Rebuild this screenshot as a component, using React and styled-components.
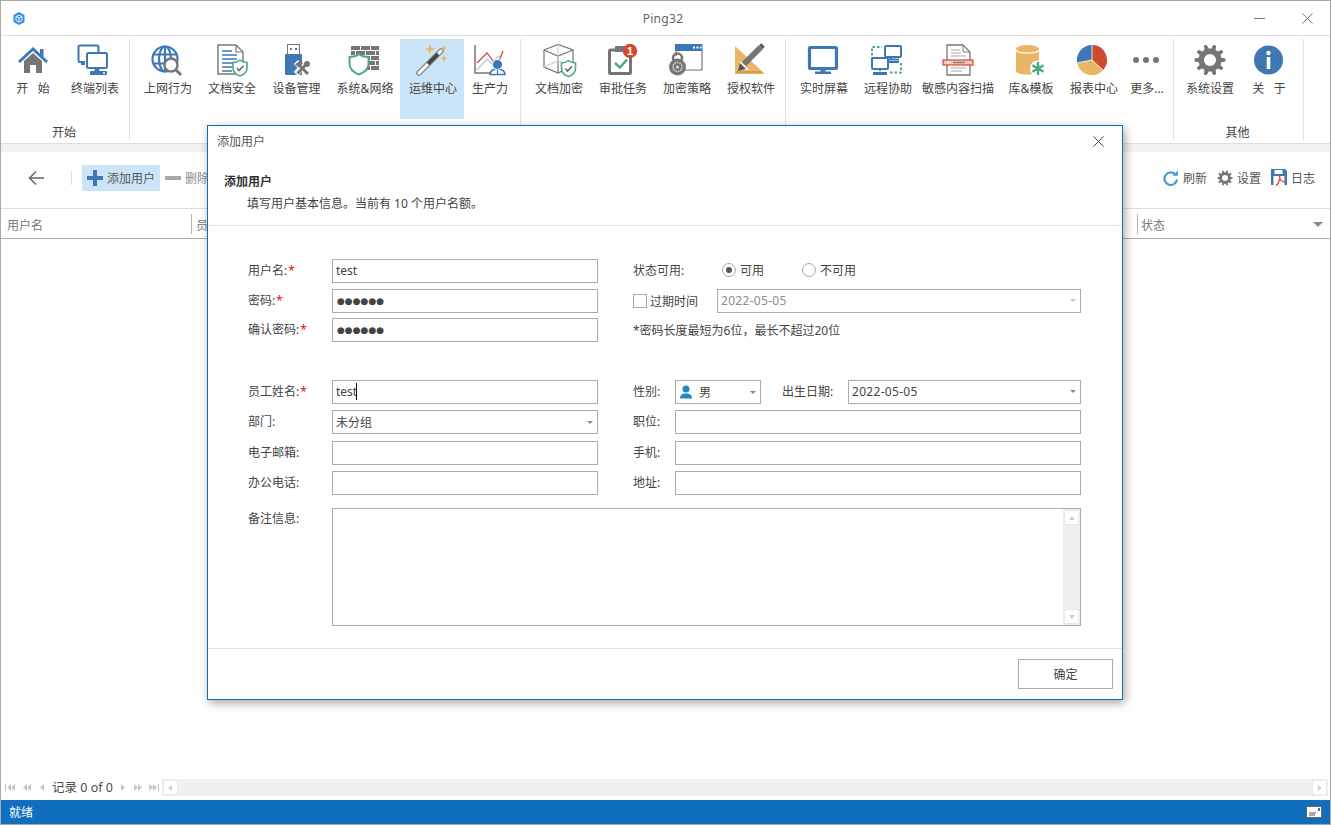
import React from 'react'
import styled, { createGlobalStyle } from 'styled-components'

const BLUE = '#3d78b4'
const GRAY = '#767676'
const GREEN = '#4fa883'
const ORANGE = '#e9b665'
const RED = '#cf4a2f'

const GlobalStyle = createGlobalStyle`
  html, body {
    margin: 0;
    padding: 0;
    background: #fff;
  }
  body {
    font-family: "Noto Sans", "Noto Sans CJK SC", sans-serif;
    font-size: 12px;
    color: #444;
  }
`

const Window = styled.div`
  position: relative;
  box-sizing: border-box;
  height: 100vh;
  border: 1px solid #a9a9a9;
  display: flex;
  flex-direction: column;
  overflow: hidden;
`

const TitleBar = styled.header`
  box-sizing: border-box;
  height: 35px;
  flex: none;
  border-bottom: 1px solid #dedede;
  display: grid;
  grid-template-columns: 1fr auto 1fr;
  align-items: center;
  color: #666;
  letter-spacing: 0.3px;
  padding: 0 17px 0 12px;
`

const WindowButtons = styled.div`
  display: flex;
  justify-content: flex-end;
  align-items: center;
  gap: 37px;
`

const Ribbon = styled.nav`
  box-sizing: border-box;
  height: 108px;
  flex: none;
  padding-top: 3px;
  border-bottom: 1px solid #dedede;
  display: flex;
`

const Group = styled.section`
  box-sizing: border-box;
  width: ${p => p.$width}px;
  height: 101px;
  padding-left: ${p => p.$pad}px;
  border-right: 1px solid #e2e2e2;
  display: flex;
  flex-direction: column;
`

const GroupItems = styled.div`
  display: flex;
  height: 80px;
`

const GroupLabel = styled.div`
  margin-top: 6px;
  line-height: 16px;
  text-align: center;
  margin-left: -${p => p.$pad}px;
  padding-right: 2px;
`

const RibbonItem = styled.div`
  width: ${p => p.$width}px;
  flex: none;
  height: 80px;
  padding-top: 5px;
  box-sizing: border-box;
  background: ${p => (p.$active ? '#cce4f7' : 'transparent')};
  display: flex;
  flex-direction: column;
  align-items: center;
  svg {
    display: block;
    overflow: visible;
  }
`

const RibbonText = styled.span`
  margin-top: 5px;
  margin-left: ${p => (p.$nudge ? '2px' : '0')};
  line-height: 16px;
  white-space: pre;
`

const Strip = styled.div`
  height: 8px;
  flex: none;
  background: #f1f1f1;
`

const Toolbar = styled.div`
  box-sizing: border-box;
  height: 57px;
  flex: none;
  padding: 0 15px 5px 27px;
  border-bottom: 1px solid #dedede;
  display: flex;
  align-items: center;
`

const ToolSeparator = styled.div`
  width: 1px;
  height: 14px;
  background: #dcdcdc;
  margin: 0 10px 0 27px;
`

const ToolButton = styled.div`
  height: 26px;
  padding: 0 5px;
  display: flex;
  align-items: center;
  gap: 4px;
  color: ${p => (p.$muted ? '#8a8a8a' : '#555')};
  background: ${p => (p.$active ? '#cce4f7' : 'transparent')};
  white-space: nowrap;
`

const ToolRight = styled.div`
  margin-left: auto;
  display: flex;
  align-items: center;
  gap: 10px;
`

const ToolLink = styled.div`
  display: flex;
  align-items: center;
  gap: 4px;
  color: #555;
`

const HeaderRow = styled.div`
  box-sizing: border-box;
  height: 30px;
  flex: none;
  border-bottom: 1px solid #adadad;
  display: flex;
  align-items: center;
  color: #777;
`

const HeaderCell = styled.div`
  box-sizing: border-box;
  height: 20px;
  width: ${p => (p.$width ? `${p.$width}px` : 'auto')};
  flex: ${p => (p.$width ? 'none' : '1')};
  padding: 2px 0 0 ${p => p.$pad}px;
  border-right: ${p => (p.$last ? 'none' : '1px solid #b5b5b5')};
  display: flex;
  align-items: center;
  justify-content: space-between;
`

const SortCaret = styled.i`
  width: 0;
  height: 0;
  margin-right: 7px;
  border-left: 5px solid transparent;
  border-right: 5px solid transparent;
  border-top: 5px solid #888;
`

const ListBody = styled.main`
  flex: 1;
`

const Pager = styled.div`
  height: 17px;
  flex: none;
  margin-bottom: 4px;
  padding: 0 2px 0 4px;
  display: flex;
  align-items: center;
`

const PagerText = styled.span`
  font-size: 12.5px;
  margin: 0 8px 2px 7px;
  white-space: nowrap;
  color: #4a4a4a;
`

const NavIcon = styled.svg`
  flex: none;
  margin-left: ${p => p.$gap || 0}px;
`

const HScroll = styled.div`
  flex: 1;
  height: 17px;
  margin-left: 3px;
  background: #f0f0f0;
  display: flex;
  justify-content: space-between;
  align-items: center;
  padding: 0 1px;
`

const ScrollButton = styled.div`
  box-sizing: border-box;
  width: 15px;
  height: 15px;
  background: #fff;
  border: 1px solid #e8e8e8;
  display: flex;
  align-items: center;
  justify-content: center;
  flex: none;
`

const Triangle = styled.i`
  width: 0;
  height: 0;
  ${p => {
    const side = '3px solid transparent'
    const fill = '4px solid #cfcfcf'
    if (p.$dir === 'left') return `border-top:${side};border-bottom:${side};border-right:${fill};`
    if (p.$dir === 'right') return `border-top:${side};border-bottom:${side};border-left:${fill};`
    if (p.$dir === 'up') return `border-left:${side};border-right:${side};border-bottom:${fill};`
    return `border-left:${side};border-right:${side};border-top:${fill};`
  }}
`

const StatusBar = styled.footer`
  height: 24px;
  flex: none;
  background: #0f6ebe;
  color: #fff;
  padding: 0 8px;
  display: flex;
  align-items: center;
  justify-content: space-between;
`

const Dialog = styled.div`
  position: absolute;
  left: 206px;
  top: 124px;
  width: 916px;
  height: 575px;
  box-sizing: border-box;
  background: #fff;
  border: 1px solid #0f6ebe;
  box-shadow: 2px 3px 9px rgba(0, 0, 0, 0.35);
  display: flex;
  flex-direction: column;
`

const DialogTitle = styled.div`
  height: 30px;
  flex: none;
  padding: 0 18px 0 9px;
  display: flex;
  align-items: center;
  justify-content: space-between;
  color: #555;
`

const DialogHead = styled.div`
  box-sizing: border-box;
  height: 70px;
  flex: none;
  padding: 17px 0 0 16px;
  border-bottom: 1px solid #e2e2e2;
`

const Heading = styled.div`
  font-weight: 700;
  line-height: 18px;
  color: #333;
`

const SubHeading = styled.div`
  margin: 4px 0 0 23px;
  line-height: 18px;
`

const Form = styled.form`
  flex: 1;
  padding: 33px 0 0 40px;
`

const Row = styled.div`
  display: flex;
  height: ${p => p.$height || 24}px;
  margin-top: ${p => p.$top || 0}px;
  align-items: ${p => (p.$tall ? 'flex-start' : 'center')};
`

const Label = styled.label`
  width: ${p => p.$width || 84}px;
  margin-left: ${p => p.$left || 0}px;
  flex: none;
  line-height: ${p => (p.$tall ? '22px' : '24px')};
  white-space: nowrap;
`

const Star = styled.span`
  color: #e01010;
  margin-left: 1px;
`

const Field = styled.div`
  box-sizing: border-box;
  height: 24px;
  width: ${p => (p.$width ? `${p.$width}px` : 'auto')};
  flex: ${p => (p.$width ? 'none' : '1')};
  border: 1px solid #ababab;
  padding: 0 3px ${p => (p.$latin ? '1px' : '0')};
  display: flex;
  align-items: center;
  color: ${p => (p.$muted ? '#8b8b8b' : '#444')};
  letter-spacing: ${p => (p.$date ? '0.3px' : '0')};
  white-space: nowrap;
`

const Dots = styled.span`
  font-family: "DejaVu Sans", sans-serif;
  font-size: 9px;
  color: #444;
  margin-left: 1px;
`

const TextCaret = styled.i`
  width: 1px;
  height: 17px;
  margin-left: -1px;
  background: #111;
`

const GenderText = styled.span`
  margin-left: 6px;
`

const SelectCaret = styled.i`
  margin-left: auto;
  margin-right: 1px;
  width: 0;
  height: 0;
  border-left: 3px solid transparent;
  border-right: 3px solid transparent;
  border-top: 3px solid ${p => (p.$faint ? '#c4c4c4' : '#888')};
`

const RightPart = styled.div`
  width: 448px;
  margin-left: 35px;
  flex: none;
  display: flex;
  align-items: center;
`

const Radio = styled.span`
  box-sizing: border-box;
  width: 14px;
  height: 14px;
  border-radius: 50%;
  border: 1px solid #a8a8a8;
  flex: none;
  display: flex;
  align-items: center;
  justify-content: center;
  &::after {
    content: '';
    width: 6px;
    height: 6px;
    border-radius: 50%;
    background: ${p => (p.$on ? '#555' : 'transparent')};
  }
`

const RadioOption = styled.span`
  display: flex;
  align-items: center;
  gap: 4px;
  width: ${p => p.$width}px;
  margin-top: -2px;
`

const Check = styled.span`
  box-sizing: border-box;
  width: 14px;
  height: 14px;
  border: 1px solid #a8a8a8;
  flex: none;
  margin-right: 3px;
`

const CheckText = styled.span`
  width: 67px;
  flex: none;
`

const Memo = styled.div`
  box-sizing: border-box;
  width: 749px;
  height: 118px;
  border: 1px solid #ababab;
  display: flex;
  justify-content: flex-end;
`

const VScroll = styled.div`
  width: 17px;
  background: #f0f0f0;
  padding: 1px;
  box-sizing: border-box;
  display: flex;
  flex-direction: column;
  justify-content: space-between;
`

const DialogFoot = styled.div`
  box-sizing: border-box;
  height: 51px;
  flex: none;
  border-top: 1px solid #e2e2e2;
  padding: 10px 9px 0 0;
  display: flex;
  justify-content: flex-end;
`

const OkButton = styled.button`
  box-sizing: border-box;
  width: 95px;
  height: 30px;
  background: #fff;
  border: 1px solid #ababab;
  font: inherit;
  color: #444;
  padding: 0;
`

const gearPath = (cx, cy, ro, ri, n) => {
  const step = (Math.PI * 2) / n
  const pts = []
  for (let i = 0; i < n; i++) {
    const a = i * step
    const pt = (r, t) => `${(cx + r * Math.cos(t)).toFixed(2)} ${(cy + r * Math.sin(t)).toFixed(2)}`
    pts.push(pt(ri, a - step * 0.3), pt(ro, a - step * 0.16), pt(ro, a + step * 0.16), pt(ri, a + step * 0.3))
  }
  return `M${pts.join('L')}Z`
}

const Shield = ({ x, y, scale = 1 }) => (
  <g transform={`translate(${x} ${y}) scale(${scale})`}>
    <path d="M0-8C2.5-6 5-5.5 7-5.5V0C7 4 4 6.5 0 8C-4 6.5-7 4-7 0V-5.5C-5-5.5-2.5-6 0-8Z" fill="#fff" stroke={GREEN} strokeWidth="1.6" />
    <path d="M-3 0L-1 2.5 3.5-2.2" fill="none" stroke="#666" strokeWidth="1.5" />
  </g>
)

const Ico = ({ children }) => (
  <svg width="32" height="32" viewBox="0 0 32 32">
    {children}
  </svg>
)

const HomeIcon = () => (
  <Ico>
    <rect x="23" y="5" width="3.5" height="8" fill={BLUE} />
    <path d="M7 17L16 9 25 17V29H19V21H13V29H7Z" fill={GRAY} />
    <path d="M2 18L16 5 30 18" fill="none" stroke={BLUE} strokeWidth="3" />
  </Ico>
)

const TerminalsIcon = () => (
  <Ico>
    <g transform="translate(-1 0)">
      <path d="M7 18H2a1.5 1.5 0 0 1-1.5-1.5V3A1.5 1.5 0 0 1 2 1.500H19A1.500 1.500 0 0 1 20.500 3V8" fill="none" stroke={BLUE} strokeWidth="2" />
      <rect x="3" y="18" width="4" height="3" fill={BLUE} />
      <rect x="9" y="9" width="20" height="15" rx="1.500" fill="#fff" stroke={BLUE} strokeWidth="2" />
      <rect x="16.500" y="24" width="5" height="3" fill={BLUE} />
      <rect x="12" y="27" width="17" height="4" rx="1" fill={BLUE} />
      <circle cx="26" cy="29" r="1" fill="#fff" />
    </g>
  </Ico>
)

const GlobeIcon = () => (
  <Ico>
    <g fill="none" stroke={BLUE} strokeWidth="2.2">
      <circle cx="14" cy="15" r="12.500" />
      <ellipse cx="14" cy="15" rx="6" ry="12.500" />
      <path d="M14 2.500V27.500M2 10.500H26M2 19.500H26" />
    </g>
    <circle cx="20" cy="21" r="6.500" fill="#fff" stroke={GRAY} strokeWidth="2.400" />
    <path d="M24.500 25.500L30 31" stroke={GRAY} strokeWidth="3" />
  </Ico>
)

const DocShieldIcon = () => (
  <Ico>
    <path d="M3 1H21L28 8V30H3Z" fill="#fff" stroke={GRAY} strokeWidth="1.400" />
    <path d="M21 1V8H28" fill="none" stroke={GRAY} strokeWidth="1.200" />
    <path d="M7 7H17M7 11H22M7 15H22M7 19H20M7 23H17M7 27H17" stroke={BLUE} strokeWidth="1.300" />
    <Shield x={25} y={24} />
  </Ico>
)

const UsbIcon = () => (
  <Ico>
    <rect x="7.500" y="0.500" width="12" height="10" fill="#fff" stroke={GRAY} />
    <rect x="10" y="4" width="2" height="2" fill={GRAY} />
    <rect x="15" y="4" width="2" height="2" fill={GRAY} />
    <rect x="5" y="10" width="17" height="21" rx="1" fill={BLUE} />
    <path d="M16 18L29 31M27 17L16 30" stroke="#fff" strokeWidth="6" />
    <path d="M18 20L28 30" stroke={GRAY} strokeWidth="3" />
    <path d="M26.500 20L17.500 29.500" stroke={GRAY} strokeWidth="3" />
    <path d="M15 20.500L20 16.500 23 19.500 19 23.500Z" fill={GRAY} />
    <circle cx="27" cy="20" r="3" fill={GRAY} />
  </Ico>
)

const WallIcon = () => {
  const rows = [
    [[3, 9], [13, 9], [23, 8]],
    [[3, 4], [8, 9], [18, 9], [28, 3]],
    [[3, 9], [13, 9], [23, 8]],
    [[8, 9], [18, 9], [28, 3]],
    [[13, 9], [23, 8]]
  ]
  return (
    <Ico>
      {rows.map((row, r) =>
        row.map(([x, w]) => <rect key={`${r}-${x}`} x={x} y={2 + r * 5} width={w} height="4" fill={GRAY} />)
      )}
      <path d="M11 10C14 12.500 18 13 20.500 13V20C20.500 25 16 28.500 11 30.500C6 28.500 1.500 25 1.500 20V13C4 13 8 12.500 11 10Z" fill="#fff" stroke={GREEN} strokeWidth="2" />
    </Ico>
  )
}

const WandIcon = () => (
  <Ico>
    <path d="M3 29L25 7" stroke="#888" strokeWidth="5.500" strokeLinecap="round" />
    <path d="M3 29L12 20" stroke="#fff" strokeWidth="3" strokeLinecap="round" />
    <path d="M12 20L22 10" stroke="#444" strokeWidth="3.500" />
    <path d="M23 9L25 7" stroke="#fff" strokeWidth="3" strokeLinecap="round" />
    <path d="M14 0L15.500 4 19.500 5 15.500 6.500 14 10 12.500 6.500 8.500 5 12.500 4Z" fill={ORANGE} />
    <path d="M28 1L29 3 31 4 29 5 28 7 27 5 25 4 27 3Z" fill={ORANGE} />
    <path d="M28 11L29.200 13.500 31.500 14.500 29.200 15.500 28 18 26.800 15.500 24.500 14.500 26.800 13.500Z" fill={ORANGE} />
  </Ico>
)

const ProductivityIcon = () => (
  <Ico>
    <path d="M2 1V29H20" fill="none" stroke={GRAY} strokeWidth="1.500" />
    <path d="M4 26L14 15 19 20 24 13 29 12" fill="none" stroke="#a9c6e6" strokeWidth="1.200" />
    <path d="M4 19L14 9 24 22 30 7" fill="none" stroke={RED} strokeWidth="1.200" />
    <path d="M17 30.500C17 27 20 26 22 25H27C29 26 32 27 32 30.500Z" fill="#fff" stroke={BLUE} strokeWidth="1.600" />
    <circle cx="24.500" cy="20.500" r="5" fill={BLUE} stroke="#fff" />
    <path d="M24.500 26V30" stroke={BLUE} strokeWidth="1.200" />
  </Ico>
)

const CubeIcon = () => (
  <Ico>
    <g fill="none" stroke={GRAY} strokeWidth="1.200">
      <path d="M1 6L15 0.500 30 6V22L15 29 1 23Z" />
      <path d="M1 6L15 12 30 6M15 12V29" />
      <path d="M1 23L15 17 30 22M15 0.500V17" stroke="#cfcfcf" />
    </g>
    <Shield x={25.500} y={24.500} />
  </Ico>
)

const ClipboardIcon = () => (
  <Ico>
    <rect x="2.500" y="6" width="21" height="23.500" rx="1" fill="#fff" stroke={GRAY} strokeWidth="3" />
    <rect x="8" y="2" width="10" height="6" fill={GRAY} />
    <path d="M8 19L13 23.500 20 15.500" fill="none" stroke={GREEN} strokeWidth="2.600" />
    <circle cx="23" cy="7" r="7.200" fill={RED} />
    <text x="23" y="11" fontSize="11" fontWeight="700" textAnchor="middle" fill="#fff" fontFamily="Liberation Sans, sans-serif">1</text>
  </Ico>
)

const LockWindowIcon = () => (
  <Ico>
    <path d="M31 7V26H12M5 7V12" fill="none" stroke={GRAY} strokeWidth="1.200" />
    <rect x="4" y="0" width="27.500" height="7" fill={BLUE} />
    <path d="M22 3.500H24M25.500 3.500H27.500M29 3.500H30.500" stroke="#fff" strokeWidth="1.800" />
    <circle cx="6.500" cy="14" r="4.500" fill="none" stroke={GRAY} strokeWidth="2.600" />
    <circle cx="6.500" cy="23" r="8.500" fill={GRAY} />
    <circle cx="6.500" cy="23" r="4.500" fill="none" stroke="#ddd" strokeWidth="1.500" strokeDasharray="1.500 1" />
    <circle cx="6.500" cy="23" r="1.500" fill="#ddd" />
  </Ico>
)

const RulerIcon = () => (
  <Ico>
    <path d="M0 2V30H30Z" fill={ORANGE} />
    <path d="M5 17V26H14Z" fill="#fff" />
    <path d="M2 28H27" stroke="#8a6a30" strokeWidth="1.500" strokeDasharray="1 1.500" />
    <path d="M9 20L26 3" stroke={GRAY} strokeWidth="6" />
    <path d="M26 3L28 1" stroke="#555" strokeWidth="5" />
    <path d="M3 27L5 19 11 25Z" fill="#555" />
  </Ico>
)

const MonitorIcon = () => (
  <Ico>
    <rect x="1.500" y="3.500" width="27" height="21" rx="1" fill="#fff" stroke={BLUE} strokeWidth="3.200" />
    <rect x="12.500" y="25" width="5" height="3" fill={BLUE} />
    <rect x="7" y="27.500" width="16" height="2.500" fill={BLUE} />
  </Ico>
)

const RemoteIcon = () => (
  <Ico>
    <path d="M0 16V3H10" fill="none" stroke={GREEN} strokeWidth="2" strokeDasharray="2.500 2" />
    <path d="M18 28.500H29V17" fill="none" stroke={GREEN} strokeWidth="2" strokeDasharray="2.500 2" />
    <rect x="13" y="2" width="16" height="11" rx="1" fill="#fff" stroke={BLUE} strokeWidth="2" />
    <path d="M19 13V15M16 15.500H27" stroke={BLUE} strokeWidth="2" />
    <rect x="16" y="17" width="11" height="2" fill={BLUE} />
    <rect x="0" y="14" width="16" height="11" rx="1" fill="#fff" stroke={BLUE} strokeWidth="2" />
    <path d="M8 25V27" stroke={BLUE} strokeWidth="2" />
    <rect x="1" y="28" width="14" height="3" fill={BLUE} />
  </Ico>
)

const ScanDocIcon = () => (
  <Ico>
    <path d="M5 1H21L28 8V31H5Z" fill="#fff" stroke={GRAY} strokeWidth="1.300" />
    <path d="M21 1V8H28" fill="none" stroke={GRAY} />
    <path d="M9 6H18M9 9H19M9 12H24M9 24H24M9 27H20" stroke="#a8a8a8" strokeWidth="1.100" />
    <rect x="1" y="16" width="30" height="5" fill="#f7c6bb" stroke={RED} strokeWidth="1.200" />
    <path d="M11 18.500H23" stroke="#777" strokeWidth="1.300" />
    <path d="M5 18.500H7" stroke="#fff" strokeWidth="1.300" />
  </Ico>
)

const DatabaseIcon = () => (
  <Ico>
    <path d="M1 5V27C1 29 6 30.500 12.500 30.500S24 29 24 27V5Z" fill={ORANGE} />
    <ellipse cx="12.500" cy="5" rx="11.500" ry="4" fill={ORANGE} />
    <path d="M1 6C2 10 23 10 24 6" fill="none" stroke="#fff" strokeWidth="1.200" />
    <circle cx="23" cy="24.500" r="8" fill="#fff" />
    <path d="M23 18V31M17.400 21.200L28.600 27.800M28.600 21.200L17.400 27.800" stroke={GREEN} strokeWidth="2.400" />
    <circle cx="23" cy="24.500" r="2.200" fill={GREEN} />
  </Ico>
)

const PieIcon = () => (
  <Ico>
    <path d="M14 16V1A15 15 0 0 1 25 26.200Z" fill={RED} />
    <path d="M14 16L25 26.200A15 15 0 0 1 -0.800 18.900Z" fill={ORANGE} />
    <path d="M14 16L-0.800 18.900A15 15 0 0 1 14 1Z" fill={BLUE} />
    <path d="M14 1V16L25 26.200M14 16L-0.800 18.900" fill="none" stroke="#fff" strokeWidth="0.800" />
  </Ico>
)

const MoreIcon = () => (
  <Ico>
    <circle cx="5" cy="16" r="3" fill={GRAY} />
    <circle cx="15" cy="16" r="3" fill={GRAY} />
    <circle cx="25" cy="16" r="3" fill={GRAY} />
  </Ico>
)

const GearIcon = ({ size = 32, hole = '#fff' }) => (
  <svg width={size} height={size} viewBox="0 0 32 32">
    <path d={gearPath(16, 16, 15.500, 11.500, 10)} fill={GRAY} />
    <circle cx="16" cy="16" r="6" fill={hole} />
  </svg>
)

const InfoIcon = () => (
  <Ico>
    <circle cx="15.500" cy="16" r="14.500" fill={BLUE} />
    <circle cx="15.500" cy="9" r="2.200" fill="#fff" />
    <rect x="13.700" y="13" width="3.600" height="12" fill="#fff" />
  </Ico>
)

const RefreshIcon = () => (
  <svg width="16" height="16" viewBox="0 0 16 16">
    <path d="M12.500 4.500A6.300 6.300 0 1 0 14 9.500" fill="none" stroke="#4b9cc8" strokeWidth="2.200" />
    <path d="M9.500 5.800H15V0.500Z" fill="#4b9cc8" />
  </svg>
)

const LogIcon = () => (
  <svg width="16" height="17" viewBox="0 0 16 17">
    <path d="M0 0H14L16 2V16H0Z" fill={BLUE} />
    <rect x="3.500" y="1" width="8" height="4" fill="#fff" />
    <rect x="2.500" y="7" width="11" height="9" fill="#fff" />
    <path d="M8.500 7C8.500 11 10 12.500 15 13.500M8.500 10C8 13 6.500 15.500 5 16.500" fill="none" stroke="#e9433f" strokeWidth="1.400" />
  </svg>
)

const groups = [
  {
    width: 129,
    pad: 0,
    label: '开始',
    items: [
      { label: '开   始', width: 64, icon: <HomeIcon /> },
      { label: '终端列表', width: 60, icon: <TerminalsIcon /> }
    ]
  },
  {
    width: 391,
    pad: 5,
    nudge: true,
    items: [
      { label: '上网行为', width: 64, icon: <GlobeIcon /> },
      { label: '文档安全', width: 64, icon: <DocShieldIcon /> },
      { label: '设备管理', width: 65, icon: <UsbIcon /> },
      { label: '系统&网络', width: 72, icon: <WallIcon /> },
      { label: '运维中心', width: 64, icon: <WandIcon />, active: true },
      { label: '生产力', width: 50, icon: <ProductivityIcon /> }
    ]
  },
  {
    width: 265,
    pad: 6,
    items: [
      { label: '文档加密', width: 64, icon: <CubeIcon /> },
      { label: '审批任务', width: 64, icon: <ClipboardIcon /> },
      { label: '加密策略', width: 64, icon: <LockWindowIcon /> },
      { label: '授权软件', width: 64, icon: <RulerIcon /> }
    ]
  },
  {
    width: 388,
    pad: 6,
    items: [
      { label: '实时屏幕', width: 64, icon: <MonitorIcon /> },
      { label: '远程协助', width: 64, icon: <RemoteIcon /> },
      { label: '敏感内容扫描', width: 76, icon: <ScanDocIcon /> },
      { label: '库&模板', width: 70, icon: <DatabaseIcon /> },
      { label: '报表中心', width: 56, icon: <PieIcon /> },
      { label: '更多...', width: 50, icon: <MoreIcon /> }
    ]
  },
  {
    width: 130,
    pad: 4,
    label: '其他',
    items: [
      { label: '系统设置', width: 64, icon: <GearIcon /> },
      { label: '关   于', width: 54, icon: <InfoIcon /> }
    ]
  }
]

const PagerArrow = ({ dir, bars, double, gap }) => {
  const tri = x => (dir === 'left' ? `M${x + 4} 1V8L${x} 4.500Z` : `M${x} 1V8L${x + 4} 4.500Z`)
  const width = double ? 8 : 5
  return (
    <NavIcon width={bars ? 10 : width} height="9" viewBox={`0 0 ${bars ? 10 : width} 9`} $gap={gap}>
      <path d={tri(bars && dir === 'left' ? 2 : 0)} fill="#c6c6c6" />
      {double && <path d={tri(bars && dir === 'left' ? 6 : 4)} fill="#c6c6c6" />}
      {bars && <rect x={dir === 'left' ? 0 : 9} y="1" width="1" height="7" fill="#c6c6c6" />}
    </NavIcon>
  )
}

function RibbonBar() {
  return (
    <Ribbon>
      {groups.map((group, i) => (
        <Group key={i} $width={group.width} $pad={group.pad}>
          <GroupItems>
            {group.items.map(item => (
              <RibbonItem key={item.label} $width={item.width} $active={item.active}>
                {item.icon}
                <RibbonText $nudge={group.nudge}>{item.label}</RibbonText>
              </RibbonItem>
            ))}
          </GroupItems>
          {group.label && <GroupLabel $pad={group.pad}>{group.label}</GroupLabel>}
        </Group>
      ))}
    </Ribbon>
  )
}

function AddUserDialog() {
  return (
    <Dialog>
      <DialogTitle>
        <span>添加用户</span>
        <svg width="11" height="11" viewBox="0 0 11 11">
          <path d="M0.500 0.500L10.500 10.500M10.500 0.500L0.500 10.500" stroke="#444" strokeWidth="1" />
        </svg>
      </DialogTitle>
      <DialogHead>
        <Heading>添加用户</Heading>
        <SubHeading>填写用户基本信息。当前有 10 个用户名额。</SubHeading>
      </DialogHead>
      <Form>
        <Row>
          <Label>用户名:<Star>*</Star></Label>
          <Field $width={266} $latin>test</Field>
          <RightPart>
            <Label $width={89}>状态可用:</Label>
            <RadioOption $width={80}><Radio $on />可用</RadioOption>
            <RadioOption $width={80}><Radio />不可用</RadioOption>
          </RightPart>
        </Row>
        <Row $top={6}>
          <Label>密码:<Star>*</Star></Label>
          <Field $width={266} $latin><Dots>●●●●●●</Dots></Field>
          <RightPart>
            <Check />
            <CheckText>过期时间</CheckText>
            <Field $muted $date $latin>2022-05-05<SelectCaret $faint /></Field>
          </RightPart>
        </Row>
        <Row $top={5}>
          <Label>确认密码:<Star>*</Star></Label>
          <Field $width={266} $latin><Dots>●●●●●●</Dots></Field>
          <RightPart>*密码长度最短为6位，最长不超过20位</RightPart>
        </Row>
        <Row $top={38}>
          <Label>员工姓名:<Star>*</Star></Label>
          <Field $width={266} $latin>test<TextCaret /></Field>
          <RightPart>
            <Label $width={42}>性别:</Label>
            <Field $width={86}>
              <svg width="14" height="14" viewBox="0 0 14 14">
                <circle cx="7" cy="4" r="3.500" fill="#1f87c8" />
                <path d="M1 13.500C1 10 3 9 5 8.500H9C11 9 13 10 13 13.500Z" fill="#1f87c8" />
              </svg>
              <GenderText>男</GenderText>
              <SelectCaret />
            </Field>
            <Label $width={66} $left={21}>出生日期:</Label>
            <Field $date $latin>2022-05-05<SelectCaret /></Field>
          </RightPart>
        </Row>
        <Row $top={6}>
          <Label>部门:</Label>
          <Field $width={266}>未分组<SelectCaret /></Field>
          <RightPart>
            <Label $width={42}>职位:</Label>
            <Field />
          </RightPart>
        </Row>
        <Row $top={7}>
          <Label>电子邮箱:</Label>
          <Field $width={266} />
          <RightPart>
            <Label $width={42}>手机:</Label>
            <Field />
          </RightPart>
        </Row>
        <Row $top={6}>
          <Label>办公电话:</Label>
          <Field $width={266} />
          <RightPart>
            <Label $width={42}>地址:</Label>
            <Field />
          </RightPart>
        </Row>
        <Row $top={13} $height={118} $tall>
          <Label $tall>备注信息:</Label>
          <Memo>
            <VScroll>
              <ScrollButton><Triangle $dir="up" /></ScrollButton>
              <ScrollButton><Triangle $dir="down" /></ScrollButton>
            </VScroll>
          </Memo>
        </Row>
      </Form>
      <DialogFoot>
        <OkButton type="button">确定</OkButton>
      </DialogFoot>
    </Dialog>
  )
}

export default function App() {
  return (
    <Window>
      <GlobalStyle />
      <TitleBar>
        <svg width="12" height="13" viewBox="0 0 12 13">
          <path d="M6 0L11.500 3V10L6 13 0.500 10V3Z" fill="#2f8fe6" />
          <path d="M3 4.500L6 3 9 4.500V8.500L6 10 3 8.500ZM3 4.500L6 6 9 4.500M6 6V10" fill="none" stroke="#fff" strokeWidth="0.900" />
        </svg>
        <span>Ping32</span>
        <WindowButtons>
          <svg width="11" height="11" viewBox="0 0 11 11">
            <path d="M0 5.500H11" stroke="#777" />
          </svg>
          <svg width="11" height="11" viewBox="0 0 11 11">
            <path d="M0.500 0.500L10.500 10.500M10.500 0.500L0.500 10.500" stroke="#777" />
          </svg>
        </WindowButtons>
      </TitleBar>
      <RibbonBar />
      <Strip />
      <Toolbar>
        <svg width="16" height="16" viewBox="0 0 16 16">
          <path d="M16 8H1.500M8 1.500L1.500 8 8 14.500" fill="none" stroke="#666" strokeWidth="1.500" />
        </svg>
        <ToolSeparator />
        <ToolButton $active>
          <svg width="16" height="16" viewBox="0 0 16 16">
            <path d="M6 0H10V6H16V10H10V16H6V10H0V6H6Z" fill={BLUE} />
          </svg>
          添加用户
        </ToolButton>
        <ToolButton $muted>
          <svg width="16" height="16" viewBox="0 0 16 16">
            <rect y="6" width="16" height="4" fill="#a8a8a8" />
          </svg>
          删除
        </ToolButton>
        <ToolRight>
          <ToolLink><RefreshIcon />刷新</ToolLink>
          <ToolLink><GearIcon size={16} />设置</ToolLink>
          <ToolLink><LogIcon />日志</ToolLink>
        </ToolRight>
      </Toolbar>
      <HeaderRow>
        <HeaderCell $width={191} $pad={6}>用户名</HeaderCell>
        <HeaderCell $pad={4}>员工姓名</HeaderCell>
        <HeaderCell $width={192} $pad={3} $last>状态<SortCaret /></HeaderCell>
      </HeaderRow>
      <ListBody />
      <Pager>
        <PagerArrow dir="left" bars double />
        <PagerArrow dir="left" double gap={8} />
        <PagerArrow dir="left" gap={9} />
        <PagerText>记录 0 of 0</PagerText>
        <PagerArrow dir="right" />
        <PagerArrow dir="right" double gap={8} />
        <PagerArrow dir="right" bars double gap={7} />
        <HScroll>
          <ScrollButton><Triangle $dir="left" /></ScrollButton>
          <ScrollButton><Triangle $dir="right" /></ScrollButton>
        </HScroll>
      </Pager>
      <StatusBar>
        <span>就绪</span>
        <svg width="16" height="12" viewBox="0 0 16 12">
          <rect x="0.500" y="0.500" width="15" height="11" fill="#fff" stroke="#666" />
          <rect x="12" y="2" width="2" height="3" fill={BLUE} />
          <path d="M3 7H10M3 9H9" stroke="#555" />
        </svg>
      </StatusBar>
      <AddUserDialog />
    </Window>
  )
}
